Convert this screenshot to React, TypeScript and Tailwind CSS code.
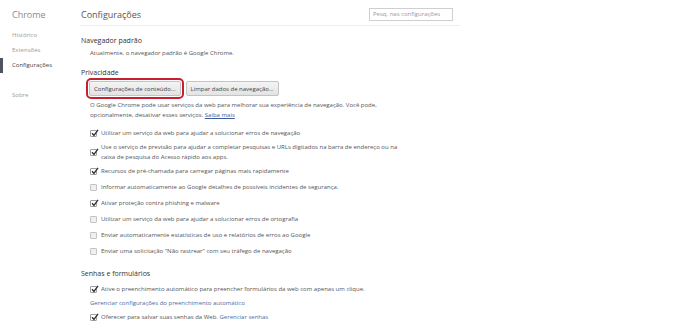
import React from 'react';

type Opt = { label: React.ReactNode; checked: boolean; tall?: boolean };

const privacyOptions: Opt[] = [
  { label: 'Utilizar um serviço da web para ajudar a solucionar erros de navegação', checked: true },
  {
    label: (
      <>
        Use o serviço de previsão para ajudar a completar pesquisas e URLs digitados na barra de endereço ou na
        <br />
        caixa de pesquisa do Acesso rápido aos apps.
      </>
    ),
    checked: true,
    tall: true,
  },
  { label: 'Recursos de pré-chamada para carregar páginas mais rapidamente', checked: true },
  { label: 'Informar automaticamente ao Google detalhes de possíveis incidentes de segurança.', checked: false },
  { label: 'Ativar proteção contra phishing e malware', checked: true },
  { label: 'Utilizar um serviço da web para ajudar a solucionar erros de ortografia', checked: false },
  { label: 'Enviar automaticamente estatísticas de uso e relatórios de erros ao Google', checked: false },
  { label: 'Enviar uma solicitação "Não rastrear" com seu tráfego de navegação', checked: false },
];

function Checkbox({ checked }: { checked: boolean }) {
  if (!checked) {
    return <div className="w-[7px] h-[7px] shrink-0 rounded-[1px] border border-[#c4c4c4] bg-[#f0f0f0]" />;
  }
  return (
    <div className="relative w-[7px] h-[7px] shrink-0 rounded-[1px] border border-[#a0a0a0] bg-white">
      <svg className="absolute -top-[2px] left-0" width="8" height="8" viewBox="0 0 8 8">
        <path d="M1 4.2 L3 6.4 L7 0.8" fill="none" stroke="#333" strokeWidth="1.4" />
      </svg>
    </div>
  );
}

function SideItem({ label, active }: { label: string; active?: boolean }) {
  return (
    <div
      className={
        active
          ? 'h-[15px] flex items-center border-l-[3px] border-[#4e5560] pl-[9px] text-[#444]'
          : 'h-[15px] flex items-center pl-[12px] text-[#9a9a9a]'
      }
    >
      {label}
    </div>
  );
}

function Button({ children, highlight }: { children: React.ReactNode; highlight?: boolean }) {
  return (
    <button
      className={
        'h-[15px] px-[4px] rounded-[2px] border border-[#c3c3c3] bg-gradient-to-b from-[#f4f4f4] to-[#e3e3e3] text-[#444] leading-none ' +
        (highlight ? 'outline-2 outline-[#c4202f] outline-offset-[1px]' : '')
      }
    >
      {children}
    </button>
  );
}

export default function App() {
  return (
    <div className="flex w-[695px] h-[327px] overflow-hidden bg-white text-[6px] text-[#555] font-['Open_Sans',sans-serif]">
      {/* sidebar */}
      <div className="w-[80px] shrink-0 pt-[8px]">
        <div className="h-[14px] flex items-center pl-[12px] text-[9px] text-[#8a8a8a]">Chrome</div>
        <div className="mt-[6px]">
          <SideItem label="Histórico" />
          <SideItem label="Extensões" />
          <SideItem label="Configurações" active />
        </div>
        <div className="mt-[15px]">
          <SideItem label="Sobre" />
        </div>
      </div>

      {/* main */}
      <div className="w-[380px] shrink-0">
        <div className="mt-[4px] h-[22px] flex items-center justify-between border-b border-[#eeeeee] pl-[1px] pr-[7px]">
          <div className="text-[9px] text-[#555]">Configurações</div>
          <div className="w-[84px] h-[13px] border border-[#cfcfcf] flex items-center pl-[3px] text-[#999]">
            Pesq. nas configurações
          </div>
        </div>

        <div className="mt-[9px] h-[12px] flex items-center pl-[1px] text-[7px] text-[#333]">Navegador padrão</div>
        <div className="h-[12px] flex items-center pl-[10px]">Atualmente, o navegador padrão é Google Chrome.</div>

        <div className="mt-[8px] h-[12px] flex items-center pl-[1px] text-[7px] text-[#333]">Privacidade</div>
        <div className="h-[19px] flex items-center gap-[5px] pl-[9px]">
          <Button highlight>Configurações de conteúdo...</Button>
          <Button>Limpar dados de navegação...</Button>
        </div>
        <div className="mt-[2px] pl-[10px] leading-[10px]">
          O Google Chrome pode usar serviços da web para melhorar sua experiência de navegação. Você pode,
          <br />
          opcionalmente, desativar esses serviços.{' '}
          <span className="text-[#3b5b99] underline">Saiba mais</span>
        </div>

        <div className="mt-[5px] pl-[10px]">
          {privacyOptions.map((o, i) => (
            <div key={i} className={(o.tall ? 'h-[22px] leading-[10px]' : 'h-[16px]') + ' flex items-center gap-[4px]'}>
              <Checkbox checked={o.checked} />
              <div className="whitespace-nowrap">{o.label}</div>
            </div>
          ))}
        </div>

        <div className="mt-[9px] h-[12px] flex items-center pl-[1px] text-[7px] text-[#333]">Senhas e formulários</div>
        <div className="mt-[2px] pl-[10px]">
          <div className="h-[14px] flex items-center gap-[4px]">
            <Checkbox checked />
            <div>Ative o preenchimento automático para preencher formulários da web com apenas um clique.</div>
          </div>
          <div className="h-[14px] flex items-center text-[#4a6ea5]">Gerenciar configurações do preenchimento automático</div>
          <div className="h-[14px] flex items-center gap-[4px]">
            <Checkbox checked />
            <div>
              Oferecer para salvar suas senhas da Web. <span className="text-[#4a6ea5]">Gerenciar senhas</span>
            </div>
          </div>
        </div>
      </div>
    </div>
  );
}
